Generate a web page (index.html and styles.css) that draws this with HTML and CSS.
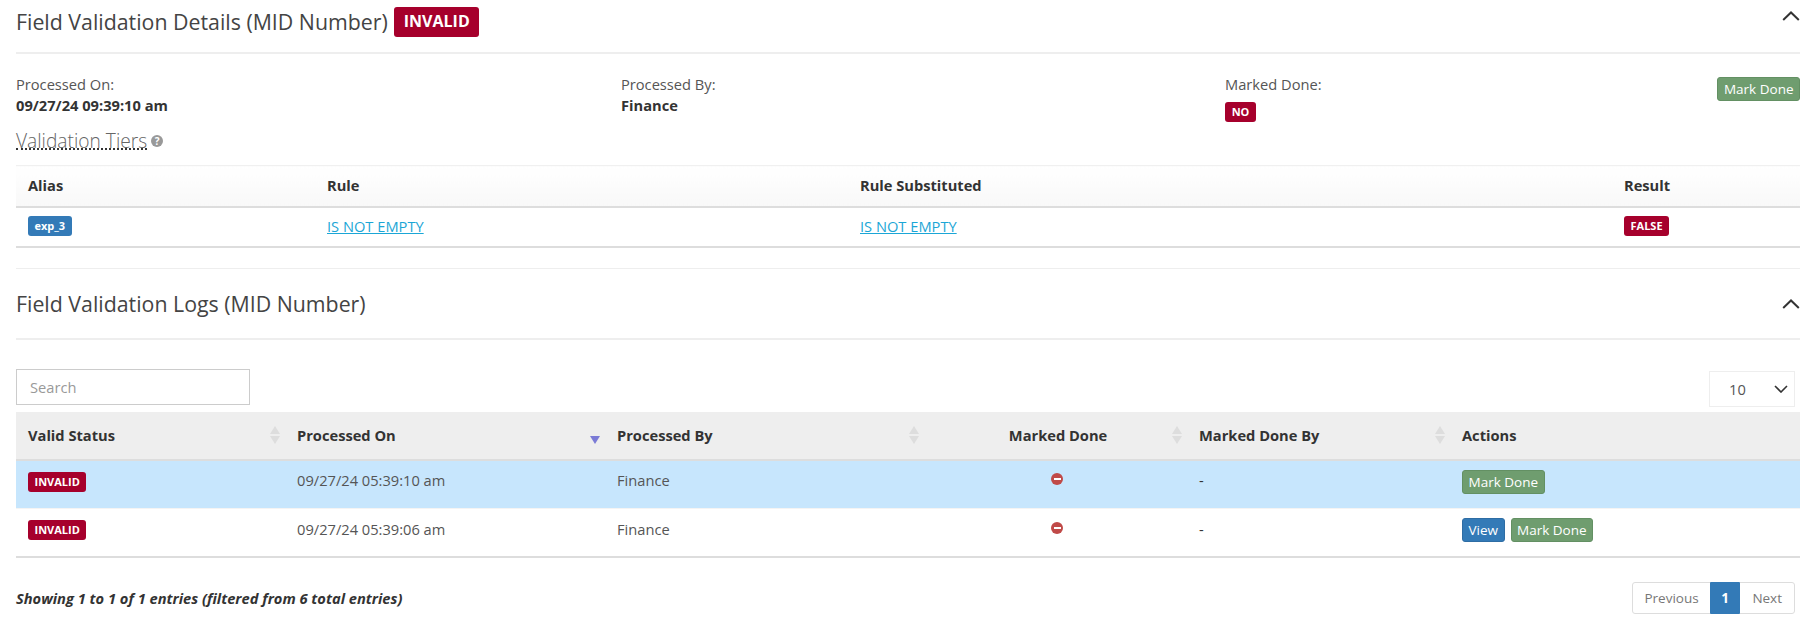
FILE: index.html
```html
<!DOCTYPE html>
<html lang="en">
<head>
<meta charset="utf-8">
<title>Field Validation</title>
<link rel="stylesheet" href="styles.css">
</head>
<body>
<section class="panel details">
  <header class="panel-head">
    <h2 class="panel-title">Field Validation Details (MID Number) <span class="label label-lg">INVALID</span></h2>
    <svg class="chevron" viewBox="0 0 18 10" width="18" height="10"><path d="M1.2 9 9 1.5 16.8 9" fill="none" stroke="#333" stroke-width="2"/></svg>
  </header>
  <div class="meta">
    <div class="meta-col"><div>Processed On:</div><strong>09/27/24 09:39:10 am</strong></div>
    <div class="meta-col"><div>Processed By:</div><strong>Finance</strong></div>
    <div class="meta-col meta-last">
      <div><div>Marked Done:</div><span class="label label-sm meta-no">NO</span></div>
      <a class="btn btn-green">Mark Done</a>
    </div>
  </div>
  <h3 class="tiers"><span class="tiers-text">Validation Tiers</span><span class="help">?</span></h3>
  <table class="tiers-table">
    <colgroup><col class="t1"><col class="t2"><col class="t3"><col></colgroup>
    <thead><tr><th>Alias</th><th>Rule</th><th>Rule Substituted</th><th>Result</th></tr></thead>
    <tbody><tr>
      <td><span class="label label-xs label-blue">exp_3</span></td>
      <td><a class="rule">IS NOT EMPTY</a></td>
      <td><a class="rule">IS NOT EMPTY</a></td>
      <td><span class="label label-xs">FALSE</span></td>
    </tr></tbody>
  </table>
</section>
<section class="panel logs">
  <header class="panel-head">
    <h2 class="panel-title">Field Validation Logs (MID Number)</h2>
    <svg class="chevron" viewBox="0 0 18 10" width="18" height="10"><path d="M1.2 9 9 1.5 16.8 9" fill="none" stroke="#333" stroke-width="2"/></svg>
  </header>
  <div class="controls">
    <input class="search" type="text" placeholder="Search">
    <div class="select"><span>10</span><svg viewBox="0 0 14 8" width="14" height="8"><path d="M1 1 7 7 13 1" fill="none" stroke="#333" stroke-width="1.6"/></svg></div>
  </div>
  <table class="logs-table">
    <colgroup><col class="l1"><col class="l2"><col class="l3"><col class="l4"><col class="l5"><col></colgroup>
    <thead><tr>
      <th><span>Valid Status</span><svg class="sort" viewBox="0 0 10 18" width="10" height="18"><path d="M5 0 10 8H0ZM5 18 0 10H10Z" fill="#ddd"/></svg></th>
      <th><span>Processed On</span><svg class="sort" viewBox="0 0 10 18" width="10" height="18"><path d="M5 18 0 10H10Z" fill="#7b7bd6"/></svg></th>
      <th><span>Processed By</span><svg class="sort" viewBox="0 0 10 18" width="10" height="18"><path d="M5 0 10 8H0ZM5 18 0 10H10Z" fill="#ddd"/></svg></th>
      <th class="center"><span>Marked Done</span><svg class="sort" viewBox="0 0 10 18" width="10" height="18"><path d="M5 0 10 8H0ZM5 18 0 10H10Z" fill="#ddd"/></svg></th>
      <th><span>Marked Done By</span><svg class="sort" viewBox="0 0 10 18" width="10" height="18"><path d="M5 0 10 8H0ZM5 18 0 10H10Z" fill="#ddd"/></svg></th>
      <th>Actions</th>
    </tr></thead>
    <tbody>
      <tr class="selected">
        <td><span class="label label-xs">INVALID</span></td>
        <td>09/27/24 05:39:10 am</td>
        <td>Finance</td>
        <td class="center"><span class="no-icon"></span></td>
        <td class="dash">-</td>
        <td><a class="btn btn-green">Mark Done</a></td>
      </tr>
      <tr>
        <td><span class="label label-xs">INVALID</span></td>
        <td>09/27/24 05:39:06 am</td>
        <td>Finance</td>
        <td class="center"><span class="no-icon"></span></td>
        <td class="dash">-</td>
        <td><a class="btn btn-blue">View</a><a class="btn btn-green">Mark Done</a></td>
      </tr>
    </tbody>
  </table>
  <footer class="table-foot">
    <em class="info">Showing 1 to 1 of 1 entries (filtered from 6 total entries)</em>
    <nav class="pager"><a>Previous</a><a class="current">1</a><a>Next</a></nav>
  </footer>
</section>
</body>
</html>
```
FILE: styles.css
```css
* { box-sizing: border-box; }
html, body { margin: 0; background: #fff; }
body {
  padding: 0 13px 0 16px;
  font-family: "Open Sans", "Liberation Sans", sans-serif;
  font-size: 14.67px;
  line-height: 20px;
  color: #555;
  overflow: hidden;
  height: 624px;
}
.panel-head {
  display: flex;
  justify-content: space-between;
  border-bottom: 2px solid #eee;
}
.details .panel-head { height: 54px; padding-top: 7px; }
.logs .panel-head { height: 71px; padding-top: 20px; align-items: flex-start; }
.panel-title {
  margin: 0;
  font-size: 21.33px;
  font-weight: 400;
  line-height: 30px;
  color: #444;
}
.chevron { margin-top: 4px; flex: none; }
.logs .chevron { margin-top: 10px; }
.label {
  display: inline-block;
  background: #a6002c;
  color: #fff;
  font-weight: 700;
  border-radius: 3px;
  text-align: center;
}
.label-lg { height: 30px; padding: 0 9.5px; font-size: 16px; line-height: 29px; margin-left: 1px; vertical-align: top; }
.label-sm { height: 20px; padding: 0 8px; font-size: 11px; line-height: 20px; }
.label-xs { height: 20px; padding: 0 6.5px; font-size: 11px; line-height: 20px; vertical-align: top; }
.label-blue { background: #337ab7; }
.meta { display: grid; grid-template-columns: 605px 604px 1fr; padding-top: 20px; height: 76px; color: #555; }
.meta strong { color: #333; font-weight: 700; line-height: 22px; display: block; }
.meta-last { display: flex; justify-content: space-between; align-items: flex-start; }
.meta-last > a { margin-top: 3px; }
.meta-no { display: block; width: 31px; padding: 0; margin-top: 8px; }
.btn {
  display: inline-block;
  height: 24px;
  padding: 0 5.5px;
  font-size: 13.5px;
  line-height: 22px;
  border: 1px solid;
  border-radius: 3px;
  color: #fff;
}
.btn + .btn { margin-left: 6px; }
.btn-green { background: #6f9d6f; border-color: #639063; }
.btn-blue { background: #337ab7; border-color: #2e6da4; }
.tiers {
  display: flex;
  align-items: center;
  gap: 4px;
  margin: 0;
  height: 35px;
  padding-bottom: 15px;
  font-size: 19.2px;
  font-weight: 300;
  line-height: 22px;
  color: #666;
}
.tiers-text { height: 20px; border-bottom: 2px dotted #333; }
.help {
  width: 12px; height: 12px;
  border-radius: 50%;
  background: #999;
  color: #fff;
  font-size: 10px;
  font-weight: 700;
  line-height: 12px;
  text-align: center;
  margin-top: 1px;
}
table { width: 100%; border-collapse: collapse; table-layout: fixed; }
.tiers-table { border-top: 1px solid #f0f0f0; }
.t1 { width: 299px; } .t2 { width: 533px; } .t3 { width: 764px; }
.tiers-table th {
  height: 41px;
  padding: 0 12px 2px;
  text-align: left;
  color: #333;
  font-weight: 700;
  background: linear-gradient(#fff, #f8f8f8);
  border-bottom: 2px solid #ddd;
}
.tiers-table td { height: 40px; padding: 0 12px 2px; border-bottom: 2px solid #ddd; }
.rule { color: #1ba6d6; text-decoration: underline; }
.logs { margin-top: 20px; border-top: 1px solid #eee; }
.controls { display: flex; justify-content: space-between; align-items: flex-end; height: 72px; padding: 0 5px 7px 0; }
.search {
  width: 234px; height: 36px;
  border: 1px solid #ccc;
  padding: 0 13px;
  font: 14.67px "Open Sans", sans-serif;
  color: #555;
  border-radius: 0;
}
.search::placeholder { color: #999; }
.select {
  width: 86px; height: 36px;
  border: 1px solid #eee;
  display: flex; align-items: center; justify-content: space-between;
  padding: 0 6px 0 19px;
  margin-bottom: -2px;
}
.logs-table thead th {
  height: 48px;
  padding: 0 12px;
  background: #eee;
  border-bottom: 2px solid #ddd;
  color: #333;
  font-weight: 700;
  text-align: left;
  position: relative;
}
.logs-table thead th.center { padding-left: 17px; }
.l1 { width: 269px; } .l2 { width: 320px; } .l3 { width: 319px; } .l4 { width: 263px; } .l5 { width: 263px; }
.sort { position: absolute; right: 5px; top: 14px; }
.logs-table td { height: 48px; padding: 9px 12px 0; color: #555; vertical-align: top; }
.logs-table td .label { margin-top: 2px; }
.logs-table td .btn { margin-top: 0; vertical-align: top; }
.logs-table tbody tr:last-child td { height: 48px; padding-top: 10px; border-bottom: 2px solid #ddd; }
.logs-table tbody tr:last-child td .label { margin-top: 1px; }
.logs-table tbody tr:last-child td .btn { margin-top: -1px; }
.logs-table .selected td { height: 49px; background: #c7e6fd; border-bottom: 1px solid #f4f4f4; }
.center { text-align: center !important; }
.logs-table td.center { padding-left: 15px; padding-right: 12px; }
.dash { color: #333 !important; }
.no-icon {
  display: inline-block;
  position: relative;
  width: 12px; height: 12px;
  border-radius: 50%;
  background: #c04a48;
  vertical-align: top;
  margin-top: 3px;
}
.no-icon::after {
  content: "";
  position: absolute;
  left: 2.5px; top: 5px;
  width: 7px; height: 2px;
  background: #fff;
}
.table-foot { display: flex; justify-content: space-between; align-items: center; padding: 24px 5px 0 0; }
.info { font-weight: 700; color: #333; }
.pager { display: flex; height: 32px; border: 1px solid #ddd; border-radius: 3px; font-size: 13.5px; color: #777; }
.pager a { padding: 0 11px; line-height: 30px; }
.pager a:last-child { padding: 0 12px; }
.pager .current { background: #337ab7; color: #fff; font-weight: 700; margin: -1px 0; padding: 0 11.5px; line-height: 32px; border-radius: 1px; }
```
